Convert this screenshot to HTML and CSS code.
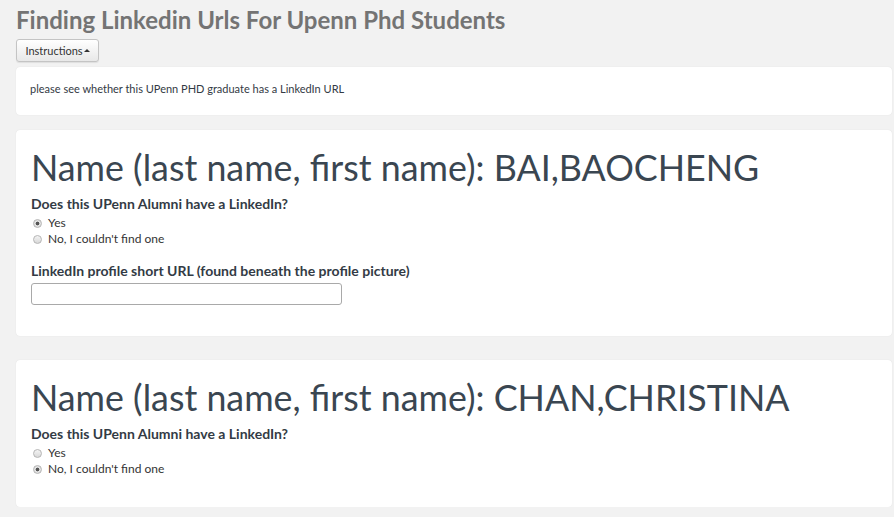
FILE: index.html
```html
<!DOCTYPE html>
<html>
<head>
<meta charset="utf-8">
<link rel="stylesheet" href="styles.css">
</head>
<body>
<div class="page">
  <h1 class="title">Finding Linkedin Urls For Upenn Phd Students</h1>
  <button class="btn">Instructions <span class="caret"></span></button>
  <div class="card card-instr">please see whether this UPenn PHD graduate has a LinkedIn URL</div>

  <div class="card card-q">
    <h2 class="name">Name (last name, first name): BAI,BAOCHENG</h2>
    <div class="qlabel">Does this UPenn Alumni have a LinkedIn?</div>
    <div class="radios">
      <label class="radio"><input type="radio" name="a" checked> Yes</label>
      <label class="radio"><input type="radio" name="a"> No, I couldn't find one</label>
    </div>
    <div class="qlabel url-label">LinkedIn profile short URL (found beneath the profile picture)</div>
    <input class="text" type="text">
  </div>

  <div class="card card-q card-last">
    <h2 class="name">Name (last name, first name): CHAN,CHRISTINA</h2>
    <div class="qlabel">Does this UPenn Alumni have a LinkedIn?</div>
    <div class="radios">
      <label class="radio"><input type="radio" name="b"> Yes</label>
      <label class="radio"><input type="radio" name="b" checked> No, I couldn't find one</label>
    </div>
  </div>
</div>
</body>
</html>
```

FILE: styles.css
```css
html, body {
  margin: 0;
  padding: 0;
}
body {
  background: #f2f2f2;
  font-family: Lato, "Open Sans", sans-serif;
  color: #3b4651;
  overflow: hidden;
}
.page {
  padding: 0 2px 0 16px;
  display: flex;
  flex-direction: column;
  align-items: flex-start;
}
.title {
  margin: 6px 0 0 0;
  font-size: 24px;
  line-height: 28px;
  font-weight: 700;
  color: #747474;
}
.btn {
  margin-top: 5px;
  height: 23px;
  width: 83px;
  padding: 0;
  font-family: Lato, sans-serif;
  font-size: 11px;
  color: #333;
  border: 1px solid #c4c4c4;
  border-radius: 3px;
  background: linear-gradient(#ffffff, #e8e8e8);
  box-shadow: 0 1px 1px rgba(0,0,0,0.08);
  display: flex;
  align-items: center;
  justify-content: center;
  gap: 1px;
}
.caret {
  width: 0;
  height: 0;
  border-left: 3px solid transparent;
  border-right: 3px solid transparent;
  border-bottom: 3px solid #333;
  margin-bottom: 1px;
}
.card {
  align-self: stretch;
  background: #fff;
  border-radius: 4px;
  box-shadow: 0 0 1px rgba(0,0,0,0.12);
  box-sizing: border-box;
}
.card-instr {
  margin-top: 5px;
  height: 48px;
  padding: 14px 14px;
  font-size: 11px;
  line-height: 15px;
  color: #333a44;
}
.card-q {
  margin-top: 15px;
  height: 206px;
  padding: 13px 15px 0 15px;
  display: flex;
  flex-direction: column;
  align-items: flex-start;
}
.card-last {
  margin-top: 24px;
  height: 147px;
}
.name {
  margin: 0;
  font-size: 35.8px;
  font-weight: 400;
  line-height: 50px;
  color: #3a4651;
  white-space: nowrap;
}
.qlabel {
  margin-top: 2px;
  font-size: 14px;
  font-weight: 700;
  line-height: 18px;
  color: #333b45;
}
.radios {
  margin-top: 2px;
  display: flex;
  flex-direction: column;
}
.url-label {
  margin-top: 15px;
}
.radio {
  display: flex;
  align-items: center;
  font-size: 12px;
  line-height: 16px;
  color: #333;
}
.radio input {
  appearance: none;
  -webkit-appearance: none;
  margin: 0 6px 0 2px;
  width: 9px;
  height: 9px;
  border-radius: 50%;
  border: 1px solid #b5b5b5;
  background: linear-gradient(#f4f4f4, #d8d8d8);
  box-sizing: border-box;
}
.radio input:checked {
  background: radial-gradient(circle, #555 0, #555 1.6px, #e6e6e6 2.2px, #d6d6d6 100%);
}
.text {
  margin-top: 3px;
  width: 311px;
  height: 22px;
  box-sizing: border-box;
  border: 1px solid #a9a9a9;
  border-radius: 3px;
  background: #fff;
}
```
